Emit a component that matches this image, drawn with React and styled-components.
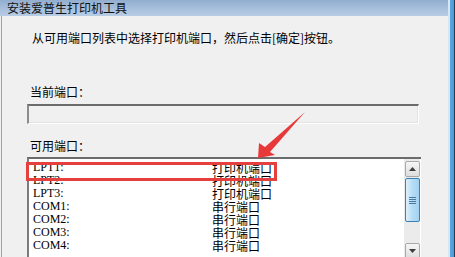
import styled, { createGlobalStyle } from "styled-components";

const GlobalStyle = createGlobalStyle`
  html, body {
    margin: 0;
    padding: 0;
    background: #f0f0f0;
  }
`;

const cjk = `"Noto Sans CJK SC", "Noto Sans", sans-serif`;

const Window = styled.div`
  position: relative;
  width: 455px;
  height: 257px;
  overflow: hidden;
  display: flex;
  background: #f0f0f0;
  font-family: ${cjk};
  font-size: 12px;
  color: #000;
`;

const Main = styled.div`
  flex: 1;
  display: flex;
  flex-direction: column;
`;

const TitleBar = styled.div`
  height: 21px;
  display: flex;
  align-items: center;
  padding-left: 7px;
  background: linear-gradient(to bottom, #92adcf 0%, #a8c0dc 55%, #b8cde5 100%);
  font-size: 12px;
  line-height: 16px;
  color: #111;
`;

const Body = styled.div`
  flex: 1;
  margin-left: 1px;
  border-left: 1px solid #a3a3a3;
  padding-left: 25px;
  display: flex;
  flex-direction: column;
`;

const RightFrame = styled.div`
  width: 7px;
  background: linear-gradient(
    to right,
    #d3e8f7 0px,
    #d3e8f7 2px,
    #5ca6dd 2px,
    #4f9ad4 6px,
    #1f3b55 6px
  );
`;

const Instruction = styled.div`
  margin-top: 14px;
  padding-left: 5px;
  line-height: 16px;
`;

const Label = styled.div`
  margin-top: ${(p) => p.top}px;
  padding-left: 3px;
  line-height: 16px;
`;

const TextBox = styled.div`
  margin-top: 4px;
  width: 392px;
  height: 20px;
  box-sizing: border-box;
  background: #f0f0f0;
  border-top: 2px solid #6c6c6c;
  border-left: 2px solid #8c8c8c;
  border-bottom: 1px solid #ffffff;
  border-right: 1px solid #ffffff;
  box-shadow: inset -1px -1px 0 #e3e3e3;
`;

const ListBox = styled.div`
  margin-top: 3px;
  width: 394px;
  height: 120px;
  box-sizing: border-box;
  background: #fff;
  border-top: 2px solid #6c6c6c;
  border-left: 2px solid #7c7c7c;
  display: flex;
`;

const Rows = styled.div`
  flex: 1;
  padding-top: 2px;
  padding-left: 4px;
`;

const Row = styled.div`
  height: 13px;
  display: flex;
  align-items: center;
  line-height: 13px;
`;

const PortName = styled.span`
  width: 179px;
  font-family: "Liberation Serif", serif;
  font-size: 12px;
`;

const PortType = styled.span`
  font-family: ${cjk};
  font-size: 12px;
`;

const ScrollBar = styled.div`
  width: 16px;
  margin-right: 1px;
  padding-top: 2px;
  background: #ebebeb;
  display: flex;
  flex-direction: column;
  align-items: center;
  gap: 1px;
`;

const ArrowButton = styled.div`
  width: 15px;
  height: 16px;
  box-sizing: border-box;
  border: 1px solid #a9a9a9;
  border-radius: 2px;
  background: linear-gradient(to bottom, #f6f6f6, #dedede);
  display: flex;
  align-items: center;
  justify-content: center;
  margin-top: ${(p) => p.gap || 0}px;
`;

const Thumb = styled.div`
  width: 15px;
  height: 44px;
  box-sizing: border-box;
  border: 1px solid #3c7fb1;
  border-radius: 2px;
  background: linear-gradient(to right, #dff0fb, #b4dcf6 50%, #a4d2f1);
  display: flex;
  flex-direction: column;
  align-items: center;
  justify-content: center;
  gap: 1px;
`;

const Grip = styled.div`
  width: 7px;
  height: 1px;
  background: #4a7aa0;
`;

const Highlight = styled.div`
  position: absolute;
  left: 26px;
  top: 162px;
  width: 251px;
  height: 19px;
  box-sizing: border-box;
  border: 3px solid #e5403d;
  pointer-events: none;
`;

const Overlay = styled.svg`
  position: absolute;
  left: 0;
  top: 0;
  pointer-events: none;
`;

const ports = [
  ["LPT1:", "打印机端口"],
  ["LPT2:", "打印机端口"],
  ["LPT3:", "打印机端口"],
  ["COM1:", "串行端口"],
  ["COM2:", "串行端口"],
  ["COM3:", "串行端口"],
  ["COM4:", "串行端口"],
];

function UpArrow({ down }) {
  return (
    <svg width="7" height="4" viewBox="0 0 7 4">
      <polygon
        points={down ? "0,0 7,0 3.5,4" : "0,4 7,4 3.5,0"}
        fill="#3d3d3d"
      />
    </svg>
  );
}

export default function App() {
  return (
    <>
      <GlobalStyle />
      <Window>
        <Main>
          <TitleBar>安装爱普生打印机工具</TitleBar>
          <Body>
            <Instruction>
              从可用端口列表中选择打印机端口，然后点击[确定]按钮。
            </Instruction>
            <Label top={38}>当前端口：</Label>
            <TextBox />
            <Label top={14}>可用端口：</Label>
            <ListBox>
              <Rows>
                {ports.map(([name, type]) => (
                  <Row key={name}>
                    <PortName>{name}</PortName>
                    <PortType>{type}</PortType>
                  </Row>
                ))}
              </Rows>
              <ScrollBar>
                <ArrowButton>
                  <UpArrow />
                </ArrowButton>
                <Thumb>
                  <Grip />
                  <Grip />
                  <Grip />
                  <Grip />
                </Thumb>
                <ArrowButton gap={20}>
                  <UpArrow down />
                </ArrowButton>
              </ScrollBar>
            </ListBox>
          </Body>
        </Main>
        <RightFrame />
        <Highlight />
        <Overlay width="455" height="257" viewBox="0 0 455 257">
          <polygon
            points="258,158 259,143 265,147 305,112 270,152 275,155"
            fill="#e8393a"
          />
        </Overlay>
      </Window>
    </>
  );
}
